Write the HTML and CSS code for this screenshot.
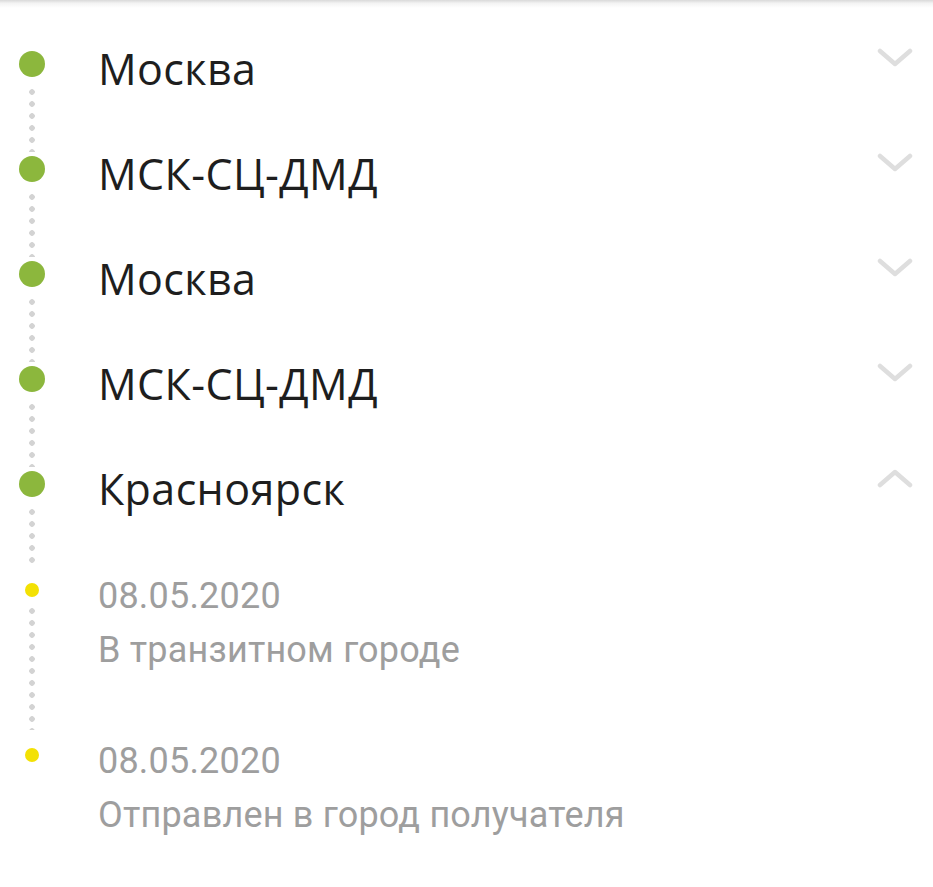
FILE: index.html
```html
<!DOCTYPE html>
<html lang="ru">
<head>
  <meta charset="UTF-8">
  <meta name="viewport" content="width=device-width, initial-scale=1.0">
  <title>Отслеживание</title>
  <link rel="stylesheet" href="styles.css">
</head>
<body>
  <div class="top-shadow"></div>

  <div class="timeline">
    <div class="stage">
      <div class="marker"><span class="dot"></span><span class="line"></span></div>
      <div class="stage-title">Москва</div>
      <svg class="chevron" viewBox="0 0 36 20"><polyline points="3,3 18,16 33,3"/></svg>
    </div>

    <div class="stage">
      <div class="marker"><span class="dot"></span><span class="line"></span></div>
      <div class="stage-title">МСК-СЦ-ДМД</div>
      <svg class="chevron" viewBox="0 0 36 20"><polyline points="3,3 18,16 33,3"/></svg>
    </div>

    <div class="stage">
      <div class="marker"><span class="dot"></span><span class="line"></span></div>
      <div class="stage-title">Москва</div>
      <svg class="chevron" viewBox="0 0 36 20"><polyline points="3,3 18,16 33,3"/></svg>
    </div>

    <div class="stage">
      <div class="marker"><span class="dot"></span><span class="line"></span></div>
      <div class="stage-title">МСК-СЦ-ДМД</div>
      <svg class="chevron" viewBox="0 0 36 20"><polyline points="3,3 18,16 33,3"/></svg>
    </div>

    <div class="stage stage-open">
      <div class="marker"><span class="dot"></span><span class="line"></span></div>
      <div class="stage-title">Красноярск</div>
      <svg class="chevron" viewBox="0 0 36 20"><polyline points="3,17 18,4 33,17"/></svg>
    </div>

    <div class="event">
      <div class="marker"><span class="dot dot-small"></span><span class="line"></span></div>
      <div class="event-info">
        <div>08.05.2020</div>
        <div>В транзитном городе</div>
      </div>
    </div>

    <div class="event event-last">
      <div class="marker"><span class="dot dot-small"></span></div>
      <div class="event-info">
        <div>08.05.2020</div>
        <div>Отправлен в город получателя</div>
      </div>
    </div>
  </div>
</body>
</html>
```

FILE: styles.css
```css
* {
  margin: 0;
  padding: 0;
  box-sizing: border-box;
}

body {
  background: #ffffff;
  font-family: 'Open Sans', sans-serif;
  color: #1e1e1e;
}

.top-shadow {
  height: 8px;
  background: linear-gradient(#d9d9d9, #f3f3f3 40%, #ffffff);
}

.timeline {
  margin-top: 43px;
}

.stage, .event {
  display: flex;
  align-items: stretch;
}

.stage {
  height: 105px;
}

.stage-open {
  height: 98px;
}

.event {
  height: 165px;
}

.event-last {
  height: 120px;
}

.marker {
  width: 64px;
  display: flex;
  flex-direction: column;
  align-items: center;
  flex-shrink: 0;
}

.dot {
  width: 26px;
  height: 26px;
  border-radius: 50%;
  background: #8cb73d;
  flex-shrink: 0;
}

.dot-small {
  width: 14px;
  height: 14px;
  margin-top: 14px;
  background: #f3e104;
}

.line {
  flex: 1;
  width: 6px;
  margin: 9px 0 4px;
  background: radial-gradient(circle, #d3d3d3 2.5px, transparent 3.1px) 0 0 / 6px 12px repeat-y;
}

.event .line {
  margin-top: 8px;
  margin-bottom: 4px;
}

.stage-title {
  flex: 1;
  padding-left: 34px;
  padding-top: 5px;
  font-size: 43px;
  letter-spacing: 0.4px;
  line-height: 26px;
}

.chevron {
  width: 36px;
  height: 20px;
  margin: -3px 20px 0 0;
  fill: none;
  stroke: #dedede;
  stroke-width: 4.5;
  stroke-linecap: round;
  stroke-linejoin: round;
}

.event-info {
  padding-left: 34px;
  font-family: Roboto, sans-serif;
  font-size: 36px;
  letter-spacing: 0.2px;
  line-height: 54px;
  color: #9e9e9e;
}
```
